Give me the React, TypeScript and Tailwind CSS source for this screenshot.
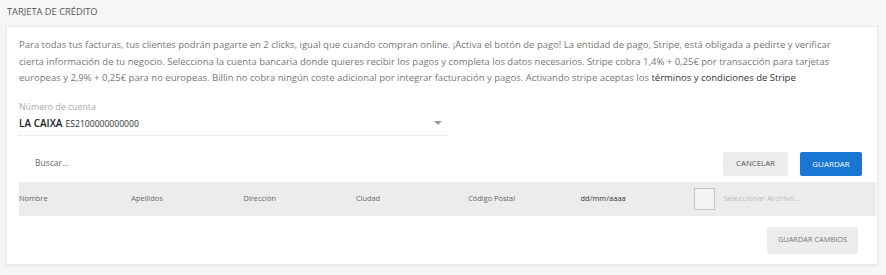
export default function App() {
  const columns = ["Nombre", "Apellidos", "Dirección", "Ciudad", "Código Postal"];

  return (
    <div className="w-[886px] h-[275px] bg-[#f6f6f6] font-['Open_Sans',sans-serif] overflow-hidden">
      <div className="h-[26px] pl-[7px] pt-[5px] text-[9.3px] text-[#555] uppercase">
        Tarjeta de crédito
      </div>

      <div className="ml-[6px] mr-[8px] h-[239px] bg-white border border-[#ececec] shadow-[0_1px_2px_rgba(0,0,0,0.06)] flex flex-col">
        <p className="pl-[12px] pr-[33px] pt-[10px] text-[9.5px] leading-[16.5px] text-[#777]">
          Para todas tus facturas, tus clientes podrán pagarte en 2 clicks, igual que cuando compran online. ¡Activa el botón de pago! La entidad de pago, Stripe, está obligada a pedirte y verificar cierta información de tu negocio. Selecciona la cuenta bancaria donde quieres recibir los pagos y completa los datos necesarios. Stripe cobra 1,4% + 0,25€ por transacción para tarjetas europeas y 2,9% + 0,25€ para no europeas. Billin no cobra ningún coste adicional por integrar facturación y pagos. Activando stripe aceptas los{" "}
          <span className="text-[#333]">términos y condiciones de Stripe</span>
        </p>

        <div className="ml-[12px] mt-[15px] w-[428px]">
          <div className="text-[8.8px] leading-[11px] text-[#aaa]">Número de cuenta</div>
          <div className="flex items-center justify-between h-[17px] mt-[2px]">
            <div className="flex items-baseline gap-[3px]">
              <span className="text-[10px] font-semibold text-[#222]">LA CAIXA</span>
              <span className="text-[8.6px] text-[#333]">ES2100000000000</span>
            </div>
            <svg width="8" height="4" viewBox="0 0 8 4" className="mr-[5px]">
              <path d="M0 0h8L4 4z" fill="#9a9a9a" />
            </svg>
          </div>
          <div className="mt-[3px] border-b border-dotted border-[#ddd]" />
        </div>

        <div className="flex items-center justify-between ml-[12px] mr-[15px] mt-[16px] h-[24px]">
          <span className="pl-[16px] text-[8.5px] text-[#666]">Buscar...</span>
          <div className="flex gap-[12px]">
            <button className="w-[65px] h-[24px] bg-[#ececec] text-[7.8px] text-[#555] rounded-[2px]">CANCELAR</button>
            <button className="w-[62px] h-[24px] bg-[#1976d2] text-[8px] text-white rounded-[2px]">GUARDAR</button>
          </div>
        </div>

        <div className="ml-[12px] mr-[1px] mt-[6px] h-[34px] bg-[#ececec] flex items-center text-[7.4px] text-[#666]">
          {columns.map((c) => (
            <div key={c} className="w-[112.3px] shrink-0">{c}</div>
          ))}
          <div className="w-[114px] shrink-0 text-[7.5px] text-[#333]">dd/mm/aaaa</div>
          <div className="w-[21px] h-[22px] border border-[#c4c4c4] bg-[#f3f3f3] shrink-0" />
          <span className="ml-[8px] text-[7.8px] text-[#bbb]">Seleccionar Archivo...</span>
        </div>

        <div className="flex justify-end mr-[19px] mt-[11px]">
          <button className="w-[91px] h-[27px] bg-[#ececec] text-[7.4px] text-[#777] rounded-[2px]">GUARDAR CAMBIOS</button>
        </div>
      </div>
    </div>
  );
}
